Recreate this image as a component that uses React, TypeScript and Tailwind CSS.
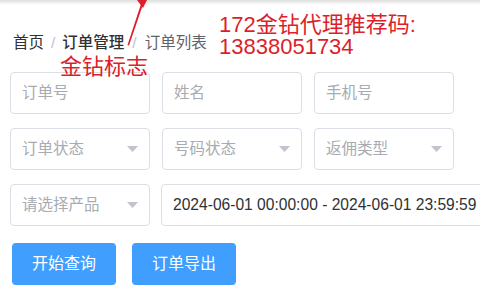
import React from "react";

const Caret = () => (
  <svg width="11" height="6" viewBox="0 0 11 6" className="shrink-0">
    <path d="M0 0 L11 0 L5.5 6 Z" fill="#c0c4cc" />
  </svg>
);

const Field = ({ ph, select }: { ph: string; select?: boolean }) => (
  <div className="h-[42px] w-[140px] rounded-[4px] border border-[#dcdfe6] bg-white flex items-center pl-[11px] pr-[11px] justify-between">
    <span className="text-[15.5px] text-[#a8abb2] leading-none">{ph}</span>
    {select && <Caret />}
  </div>
);

export default function App() {
  return (
    <div
      className="relative w-[480px] h-[300px] overflow-hidden bg-white"
      style={{ fontFamily: '"Liberation Sans", "Noto Sans CJK SC", sans-serif' }}
    >
      <div className="h-[5px] bg-gradient-to-b from-[#dedede] to-white" />
      <div className="pt-[28px] pl-[13px] h-[48px] flex items-center text-[15.5px] leading-[20px]">
        <span className="text-[#303133]">首页</span>
        <span className="text-[#c0c4cc] mx-[7px]">/</span>
        <span className="text-[#303133] font-medium">订单管理</span>
        <span className="text-[#c0c4cc] ml-[8px] mr-[8px]">/</span>
        <span className="text-[#606266]">订单列表</span>
      </div>

      <div className="pl-[10px] mt-[19px]">
        <div className="grid grid-cols-[140px_140px_140px] gap-x-[12px] gap-y-[14px]">
          <Field ph="订单号" />
          <Field ph="姓名" />
          <Field ph="手机号" />
          <Field ph="订单状态" select />
          <Field ph="号码状态" select />
          <Field ph="返佣类型" select />
          <Field ph="请选择产品" select />
          <div className="col-span-2 h-[42px] w-[340px] -ml-[1px] rounded-[4px] border border-[#dcdfe6] flex items-center pl-[11px]">
            <span className="text-[15.6px] text-[#303133] whitespace-nowrap leading-none">
              2024-06-01 00:00:00 - 2024-06-01 23:59:59
            </span>
          </div>
        </div>
        <div className="flex gap-[16px] ml-[2px] mt-[17px]">
          <button className="w-[104px] h-[42px] rounded-[4px] bg-[#409eff] text-white text-[16px]">开始查询</button>
          <button className="w-[104px] h-[42px] rounded-[4px] bg-[#409eff] text-white text-[16px]">订单导出</button>
        </div>
      </div>

      {/* annotation overlay */}
      <svg className="absolute left-0 top-0" width="480" height="60" viewBox="0 0 480 60">
        <path d="M127.5 45 L141 4 L143 4.5 L129 45.5 Z" fill="#dc1f2b" />
        <path d="M137 0 L147 0 L143 8 Z" fill="#dc1f2b" />
      </svg>
      <div
        className="absolute left-[60px] top-[51px] text-[22px] leading-[26px] text-[#dc1f2b]"
        style={{ fontFamily: '"Noto Sans CJK SC", sans-serif' }}
      >
        金钻标志
      </div>
      <div
        className="absolute left-[219px] top-[14px] text-[22px] leading-[22px] text-[#dc1f2b]"
        style={{ fontFamily: '"Liberation Sans", "Noto Sans CJK SC", sans-serif' }}
      >
        <div>172金钻代理推荐码:</div>
        <div>13838051734</div>
      </div>
    </div>
  );
}
